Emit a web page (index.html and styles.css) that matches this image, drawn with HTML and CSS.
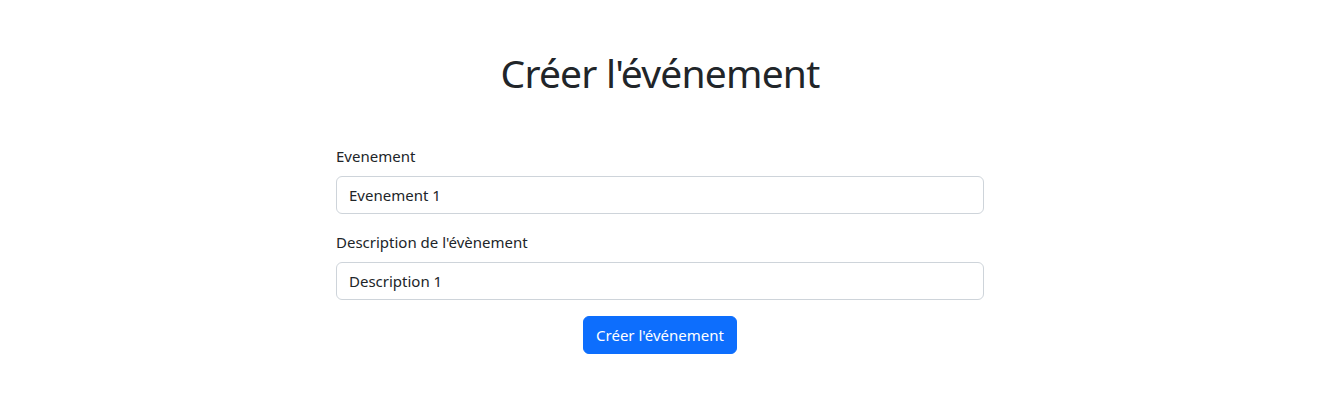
FILE: index.html
```html
<!DOCTYPE html>
<html lang="fr">
<head>
<meta charset="utf-8">
<title>Créer l'événement</title>
<link rel="stylesheet" href="styles.css">
</head>
<body>
<main class="page">
  <h1 class="title">Créer l'événement</h1>
  <form class="event-form">
    <div class="field">
      <label class="field-label" for="name">Evenement</label>
      <input class="field-input" id="name" type="text" value="Evenement 1">
    </div>
    <div class="field">
      <label class="field-label" for="desc">Description de l'évènement</label>
      <input class="field-input" id="desc" type="text" value="Description 1">
    </div>
    <div class="actions">
      <button class="btn-primary" type="submit">Créer l'événement</button>
    </div>
  </form>
</main>
</body>
</html>
```
FILE: styles.css
```css
* { box-sizing: border-box; }
body {
  margin: 0;
  font-family: "Noto Sans", "Open Sans", sans-serif;
  font-size: 16px;
  line-height: 24px;
  color: #212529;
  background: #fff;
}
.page {
  padding: 0 12px;
}
.title {
  text-align: center;
  font-size: 39px;
  letter-spacing: -0.8px;
  font-weight: 400;
  line-height: 48px;
  margin: 49px 0 47px;
}
.event-form {
  width: 50%;
  margin: 0 auto;
}
.field {
  margin-bottom: 16px;
}
.field-label {
  display: block;
  margin-bottom: 8px;
  font-size: 15px;
}
.field-input {
  display: block;
  width: 100%;
  height: 38px;
  padding: 6px 12px;
  font: inherit;
  font-size: 15px;
  color: #212529;
  background: #fff;
  border: 1px solid #ced4da;
  border-radius: 6px;
}
.actions {
  display: flex;
  justify-content: center;
}
.btn-primary {
  height: 38px;
  padding: 6px 12px;
  font: inherit;
  font-size: 15px;
  color: #fff;
  background: #0d6efd;
  border: 1px solid #0d6efd;
  border-radius: 6px;
}
```
